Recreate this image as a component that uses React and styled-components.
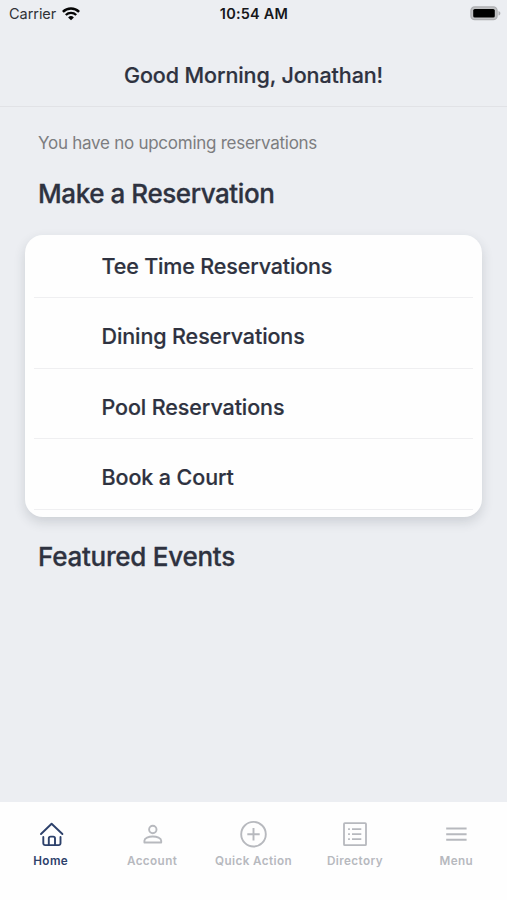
import React from 'react';
import styled, { createGlobalStyle } from 'styled-components';

const GlobalStyle = createGlobalStyle`
    * {
      box-sizing: border-box;
    }

    body {
      margin: 0;
      background-color: #eceef2;
      font-family: Inter, "Liberation Sans", sans-serif;
      color: #2e3240;
    }
`;

const Screen = styled.div`
    display: flex;
    flex-direction: column;
    width: 100%;
    height: 100vh;
    overflow: hidden;
    background-color: #eceef2;
`;

const StatusBar = styled.div`
    display: grid;
    grid-template-columns: 1fr auto 1fr;
    align-items: center;
    height: 27px;
    padding: 0 6px 0 9px;
    color: #16171b;
    line-height: 27px;
`;

const Carrier = styled.span`
    display: flex;
    align-items: center;
    gap: 6px;
    font-size: 14.5px;
    letter-spacing: -0.05px;
    color: #303236;
`;

const Clock = styled.span`
    margin-right: 2px;
    font-size: 14.5px;
    font-weight: 600;
    letter-spacing: 0.2px;
`;

const BatterySlot = styled.span`
    display: flex;
    justify-content: flex-end;
`;

const Header = styled.header`
    display: flex;
    align-items: center;
    justify-content: center;
    height: 80px;
    padding-top: 17px;
    border-bottom: 1px solid #e1e2e6;
`;

const Greeting = styled.h1`
    margin: 0;
    font-size: 21.5px;
    font-weight: 500;
    line-height: 28px;
    letter-spacing: -0.1px;
    -webkit-text-stroke: 0.2px currentColor;
`;

const Content = styled.main`
    flex: 1;
    padding: 25px 25px 0;
`;

const Notice = styled.p`
    margin: 0 0 0 13px;
    font-size: 17px;
    line-height: 22px;
    letter-spacing: -0.26px;
    color: #7c7d80;
`;

const SectionTitle = styled.h2`
    margin: ${props => props.$top} 0 0 13px;
    font-size: 26px;
    font-weight: 500;
    line-height: 34px;
    letter-spacing: ${props => props.$tracking};
    -webkit-text-stroke: 0.3px currentColor;
`;

const Card = styled.div`
    height: 282px;
    margin-top: 23.5px;
    padding: 0 9px;
    border-radius: 18px;
    background-color: #fefefe;
    box-shadow: 0 5px 12px rgba(40, 50, 60, 0.16);
`;

const Option = styled.div`
    display: flex;
    align-items: flex-end;
    height: ${props => props.$first ? '63.5px' : '70.5px'};
    padding: 0 0 17.5px 67.5px;
    border-bottom: 1px solid #efeff1;
    font-size: 21.5px;
    font-weight: 500;
    line-height: 28px;
    letter-spacing: ${props => props.$first ? '-0.16px' : '-0.1px'};
    -webkit-text-stroke: 0.2px currentColor;
`;

const TabBar = styled.nav`
    display: grid;
    grid-template-columns: repeat(5, 1fr);
    height: 98.5px;
    padding-top: 18.5px;
    background-color: #fefefe;
`;

const Tab = styled.div`
    display: flex;
    flex-direction: column;
    align-items: center;
    gap: 4px;
    color: ${props => props.$active ? '#2d416b' : '#b7b9be'};
`;

const TabLabel = styled.span`
    font-size: 11.7px;
    font-weight: 600;
    line-height: 16px;
    letter-spacing: 0.4px;
    white-space: nowrap;
`;

const WifiIcon = () => (
    <svg width="18" height="14" viewBox="0 0 18 14" fill="none" stroke="#050505">
        <path d="M0.9 4.9a11.6 11.6 0 0 1 16.2 0" strokeWidth="2.5" />
        <path d="M3.8 8a7.4 7.4 0 0 1 10.4 0" strokeWidth="2.3" />
        <path d="M9 13.3L6.1 10.4a4.1 4.1 0 0 1 5.8 0Z" fill="#050505" stroke="none" />
    </svg>
);

const BatteryIcon = () => (
    <svg width="31" height="15" viewBox="0 0 31 15">
        <rect x="0.9" y="0.9" width="26.2" height="12.8" rx="3.8" fill="#c0c1c3" stroke="#adaeb1" strokeWidth="1.2" />
        <rect x="3.2" y="3" width="21.6" height="8.6" rx="1.6" fill="#000" />
        <path d="M28.5 5c2.5 0.8 2.5 3.8 0 4.6Z" fill="#adaeb1" />
    </svg>
);

const icons = {
    home: (
        <g strokeWidth="1.9" strokeLinecap="round" strokeLinejoin="round">
            <path d="M5 14L15.6 3.7L26.4 14" />
            <path d="M7.3 17V23.3a1.8 1.8 0 0 0 1.8 1.8H22.7a1.8 1.8 0 0 0 1.8-1.8V17" />
            <path d="M12.8 25V18.4a1.8 1.8 0 0 1 1.8-1.8H17.2a1.8 1.8 0 0 1 1.8 1.8V25" />
        </g>
    ),
    account: (
        <g strokeWidth="1.9">
            <circle cx="15.8" cy="9.5" r="3.7" />
            <path d="M7.4 22.5V20.8c0-2.7 4.2-4.3 8.4-4.3s8.4 1.6 8.4 4.3V22.5Z" strokeLinejoin="round" />
        </g>
    ),
    quick: (
        <g strokeWidth="1.9">
            <circle cx="15.5" cy="14.2" r="12.3" />
            <path d="M15.5 8v12.4M9.3 14.2H21.7" />
        </g>
    ),
    directory: (
        <g strokeWidth="1.8">
            <rect x="4" y="3.2" width="22" height="22" rx="0.8" />
            <path d="M8.1 9.2h1.8M8.1 14.2h1.8M8.1 19.2h1.8M12 9.2h9.3M12 14.2h9.3M12 19.2h9.3" />
        </g>
    ),
    menu: (
        <path d="M5.2 8.6H25.6M5.2 14.2H25.6M5.2 19.7H25.6" strokeWidth="2" />
    ),
};

const reservations = [
    'Tee Time Reservations',
    'Dining Reservations',
    'Pool Reservations',
    'Book a Court',
];

const tabs = [
    { icon: 'home', label: 'Home' },
    { icon: 'account', label: 'Account' },
    { icon: 'quick', label: 'Quick Action' },
    { icon: 'directory', label: 'Directory' },
    { icon: 'menu', label: 'Menu' },
];

export default function App() {
    return (
        <Screen>
            <GlobalStyle />
            <StatusBar>
                <Carrier>Carrier <WifiIcon /></Carrier>
                <Clock>10:54 AM</Clock>
                <BatterySlot><BatteryIcon /></BatterySlot>
            </StatusBar>
            <Header>
                <Greeting>Good Morning, Jonathan!</Greeting>
            </Header>
            <Content>
                <Notice>You have no upcoming reservations</Notice>
                <SectionTitle $top="23px" $tracking="-0.43px">Make a Reservation</SectionTitle>
                <Card>
                    {reservations.map((name, i) => (
                        <Option key={name} $first={i === 0}>{name}</Option>
                    ))}
                </Card>
                <SectionTitle $top="23px" $tracking="-0.25px">Featured Events</SectionTitle>
            </Content>
            <TabBar>
                {tabs.map(tab => (
                    <Tab key={tab.label} $active={tab.icon === 'home'}>
                        <svg width="30" height="29" viewBox="0 0 30 29" fill="none" stroke="currentColor">
                            {icons[tab.icon]}
                        </svg>
                        <TabLabel>{tab.label}</TabLabel>
                    </Tab>
                ))}
            </TabBar>
        </Screen>
    );
}
